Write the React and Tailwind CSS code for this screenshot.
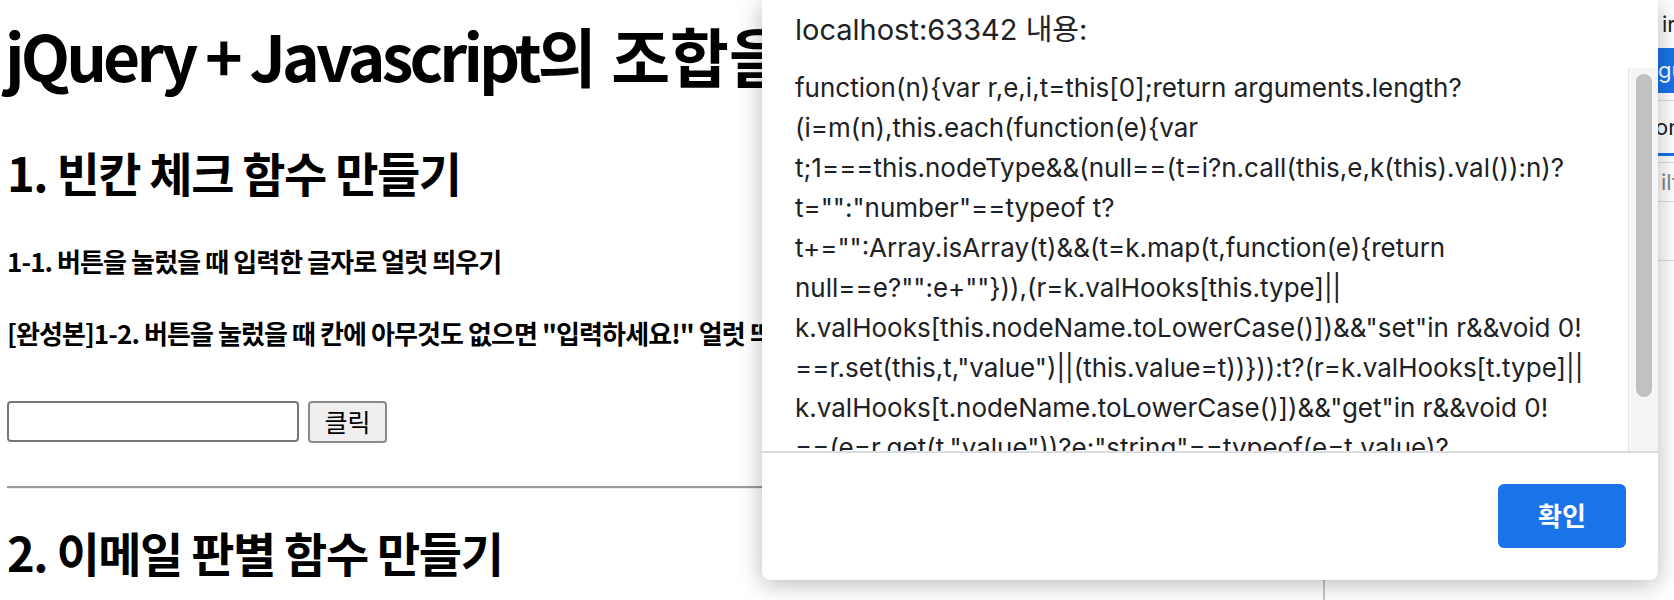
import React from "react";

const codeLines = [
  'function(n){var r,e,i,t=this[0];return arguments.length?',
  '(i=m(n),this.each(function(e){var',
  't;1===this.nodeType&&(null==(t=i?n.call(this,e,k(this).val()):n)?',
  't="":"number"==typeof t?',
  't+="":Array.isArray(t)&&(t=k.map(t,function(e){return',
  'null==e?"":e+""})),(r=k.valHooks[this.type]||',
  'k.valHooks[this.nodeName.toLowerCase()])&&"set"in r&&void 0!',
  '==r.set(this,t,"value")||(this.value=t))})):t?(r=k.valHooks[t.type]||',
  'k.valHooks[t.nodeName.toLowerCase()])&&"get"in r&&void 0!',
  '==(e=r.get(t,"value"))?e:"string"==typeof(e=t.value)?',
  'e.replace(Ct,""):null==e?"":e:void 0}',
];

const pageFont = { fontFamily: '"Noto Sans CJK KR", "Noto Sans", sans-serif' };
const uiFont = { fontFamily: 'Inter, "Noto Sans CJK KR", sans-serif' };

export default function App() {
  return (
    <div className="relative w-[1674px] h-[600px] overflow-hidden bg-white flex">
      {/* Page */}
      <div className="w-[1323px] shrink-0 flex flex-col pl-[7px] text-black" style={pageFont}>
        <h1 className="mt-[14px] h-[80px] leading-[80px] text-[64px] font-bold whitespace-nowrap -ml-[2px]">
          <span className="tracking-[-0.06em]">jQuery + Javascript</span>의 조합을
        </h1>
        <h2 className="mt-[48px] h-[60px] leading-[60px] text-[47px] font-bold whitespace-nowrap tracking-[-0.03em]">
          1. 빈칸 체크 함수 만들기
        </h2>
        <h4 className="mt-[43px] h-[32px] leading-[32px] text-[26px] font-bold whitespace-nowrap tracking-[-0.035em]">
          1-1. 버튼을 눌렀을 때 입력한 글자로 얼럿 띄우기
        </h4>
        <h4 className="mt-[40px] h-[32px] leading-[32px] text-[26px] font-bold whitespace-nowrap tracking-[-0.035em]">
          [완성본]1-2. 버튼을 눌렀을 때 칸에 아무것도 없으면 "입력하세요!" 얼럿 띄우기
        </h4>
        <div className="mt-[52px] flex items-start gap-[9px]">
          <div className="w-[292px] h-[41px] border-2 border-[#767676] rounded-[4px] bg-white" />
          <div className="w-[79px] h-[42px] border-2 border-[#8a8a8a] rounded-[4px] bg-[#efefef] flex items-center justify-center text-[25px] leading-none pb-[2px]">
            클릭
          </div>
        </div>
        <div className="mt-[43px] border-t-2 border-[#9a9a9a] border-b border-b-[#eeeeee] h-[3px]" />
        <h2 className="mt-[33px] h-[60px] leading-[60px] text-[47px] font-bold whitespace-nowrap tracking-[-0.03em]">
          2. 이메일 판별 함수 만들기
        </h2>
      </div>

      {/* Devtools panel */}
      <div className="flex-1 border-l-2 border-[#c8c8c8] flex flex-col bg-white text-[22px] overflow-hidden" style={uiFont}>
        <div className="h-[48px] flex items-center whitespace-nowrap pl-[337px] text-[#202124]">ir</div>
        <div className="h-[45px] bg-[#1a73e8] flex items-center whitespace-nowrap pl-[333px] text-white">gu</div>
        <div className="h-[7px]" />
        <div className="border-t border-[#dddddd] h-[53px] flex items-center whitespace-nowrap pl-[330px] text-[#202124]">on</div>
        <div className="h-[3px] bg-[#1a73e8]" />
        <div className="h-[6px]" />
        <div className="border-t border-[#dddddd] h-[39px] flex items-center whitespace-nowrap pl-[336px] text-[#80868b]">ilt</div>
        <div className="border-t border-[#dddddd] h-[59px]" />
        <div className="border-t border-[#dddddd]" />
      </div>

      {/* Alert dialog overlay */}
      <div
        className="absolute left-[762px] top-0 w-[896px] h-[580px] bg-white rounded-b-[8px] shadow-[0_4px_24px_rgba(0,0,0,0.28)] flex flex-col text-[#202124]"
        style={uiFont}
      >
        <div className="pt-[10px] pl-[33px] h-[50px] text-[29px] leading-[40px] whitespace-nowrap">
          localhost:63342 내용:
        </div>
        <div className="mt-[18px] h-[383px] flex overflow-hidden">
          <div className="flex-1 pl-[33px] overflow-hidden">
            {codeLines.map((l, i) => (
              <div key={i} className="h-[40px] leading-[40px] text-[26px] whitespace-nowrap">
                {l}
              </div>
            ))}
          </div>
          <div className="w-[30px] bg-[#f5f5f5] border-l border-[#e6e6e6] pt-[6px] pl-[7px]">
            <div className="w-[16px] h-[323px] rounded-full bg-[#c1c1c1]" />
          </div>
        </div>
        <div className="border-t-2 border-[#dadce0] flex-1 flex justify-end items-start pt-[31px] pr-[32px]">
          <div className="w-[128px] h-[64px] rounded-[6px] bg-[#1a73e8] text-white flex items-center justify-center text-[26px] font-semibold">
            확인
          </div>
        </div>
      </div>
    </div>
  );
}
